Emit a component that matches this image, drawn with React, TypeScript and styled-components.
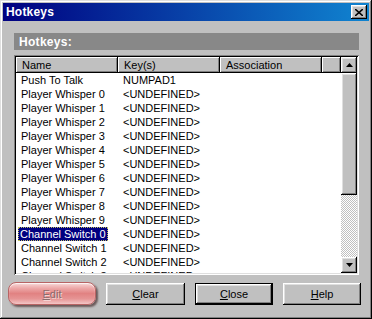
import React from 'react';
import styled, { createGlobalStyle } from 'styled-components';

const GlobalStyle = createGlobalStyle`
  html, body {
    margin: 0;
    padding: 0;
    background: #c0c0c0;
  }
  body {
    font-family: "Liberation Sans", Arial, sans-serif;
    font-size: 11px;
    color: #000;
  }
  * {
    box-sizing: border-box;
  }
`;

const raised = `
  box-shadow: inset -1px -1px #000, inset 1px 1px #fff, inset -2px -2px #808080, inset 2px 2px #dfdfdf;
`;

const Window = styled.div`
  width: 372px;
  height: 319px;
  background: #c0c0c0;
  padding: 3px;
  display: flex;
  flex-direction: column;
  box-shadow: inset -1px -1px #000, inset 1px 1px #dfdfdf, inset -2px -2px #808080, inset 2px 2px #fff;
`;

const TitleBar = styled.div`
  height: 18px;
  flex-shrink: 0;
  display: flex;
  align-items: center;
  justify-content: space-between;
  padding: 0 2px 0 3px;
  background: linear-gradient(to right, #000080, #1084d0);
`;

const TitleText = styled.span`
  color: #fff;
  font-weight: bold;
  font-size: 12px;
  letter-spacing: 0.2px;
`;

const TitleButton = styled.div`
  width: 16px;
  height: 14px;
  background: #c0c0c0;
  display: flex;
  align-items: center;
  justify-content: center;
  ${raised}
`;

const Group = styled.div`
  padding: 12px 10px 0 11px;
  display: flex;
  flex-direction: column;
`;

const GroupHeader = styled.div`
  height: 17px;
  background: #888888;
  color: #fff;
  font-weight: bold;
  font-size: 12px;
  display: flex;
  align-items: center;
  padding-left: 5px;
  letter-spacing: 0.3px;
`;

const ListView = styled.div`
  margin-top: 5px;
  height: 220px;
  padding: 2px;
  background: #fff;
  display: flex;
  box-shadow: inset 1px 1px #808080, inset -1px -1px #fff, inset 2px 2px #000, inset -2px -2px #dfdfdf;
`;

const ListMain = styled.div`
  flex: 1;
  overflow: hidden;
  display: flex;
  flex-direction: column;
`;

const HeaderRow = styled.div`
  display: flex;
  height: 16px;
  flex-shrink: 0;
`;

const HeaderCell = styled.div<{ $width: number }>`
  width: ${p => p.$width}px;
  flex-shrink: 0;
  height: 16px;
  line-height: 16px;
  padding-left: 6px;
  background: #c0c0c0;
  box-shadow: inset -1px -1px #000, inset 1px 1px #fff, inset -2px -2px #808080;
  white-space: nowrap;
  overflow: hidden;
`;

const Row = styled.div`
  display: flex;
  height: 14px;
  line-height: 14px;
  flex-shrink: 0;
`;

const Cell = styled.div<{ $width: number }>`
  width: ${p => p.$width}px;
  flex-shrink: 0;
  padding-left: 5px;
  white-space: nowrap;
  overflow: hidden;
`;

const Selected = styled.span`
  display: inline-block;
  margin-left: -3px;
  padding: 0 2px;
  height: 14px;
  background: #000080;
  color: #fff;
  outline: 1px dotted #c0c060;
  outline-offset: -1px;
`;

const ScrollBar = styled.div`
  width: 16px;
  flex-shrink: 0;
  display: flex;
  flex-direction: column;
`;

const ScrollButton = styled.div`
  height: 16px;
  flex-shrink: 0;
  background: #c0c0c0;
  display: flex;
  align-items: center;
  justify-content: center;
  ${raised}
`;

const Thumb = styled.div<{ $height: number }>`
  height: ${p => p.$height}px;
  flex-shrink: 0;
  background: #c0c0c0;
  ${raised}
`;

const Track = styled.div`
  flex: 1;
  background-color: #c0c0c0;
  background-image: conic-gradient(#fff 25%, #c0c0c0 0 50%, #fff 0 75%, #c0c0c0 0);
  background-size: 2px 2px;
`;

const ButtonRow = styled.div`
  margin-top: 7px;
  padding: 0 8px 0 5px;
  display: flex;
  justify-content: space-between;
  align-items: flex-start;
`;

const Button = styled.div<{ $width: number; $default?: boolean }>`
  width: ${p => p.$width}px;
  height: 22px;
  background: #c0c0c0;
  display: flex;
  align-items: center;
  justify-content: center;
  margin-top: 1px;
  ${p =>
    p.$default
      ? `box-shadow: inset 0 0 0 1px #000, inset -2px -2px #000, inset 2px 2px #fff, inset -3px -3px #808080, inset 3px 3px #dfdfdf;`
      : raised}
`;

const GlossyButton = styled.div<{ $width: number }>`
  width: ${p => p.$width}px;
  height: 23px;
  border-radius: 8px;
  display: flex;
  align-items: center;
  justify-content: center;
  color: #8a6c6c;
  text-shadow: 1px 1px #f4d4d4;
  border: 1px solid #b86464;
  background: linear-gradient(
    to bottom,
    #f8d8d8 0%,
    #eda8a8 25%,
    #e18282 50%,
    #e69494 75%,
    #f3c6c6 100%
  );
  box-shadow: 2px 2px 2px rgba(50, 20, 20, 0.6), inset 0 1px 1px rgba(255, 255, 255, 0.8);
`;

const Mnemonic = styled.span`
  text-decoration: underline;
`;

const columns = [102, 102, 102, 19];

const rows: [string, string][] = [
  ['Push To Talk', 'NUMPAD1'],
  ...Array.from({ length: 10 }, (_, i) => [`Player Whisper ${i}`, '<UNDEFINED>'] as [string, string]),
  ...Array.from({ length: 4 }, (_, i) => [`Channel Switch ${i}`, '<UNDEFINED>'] as [string, string]),
];

const selectedIndex = 11;

const Arrow = ({ down }: { down?: boolean }) => (
  <svg width="7" height="4" viewBox="0 0 7 4">
    <path d={down ? 'M0 0H7L3.5 4Z' : 'M3.5 0L7 4H0Z'} fill="#000" />
  </svg>
);

const CloseGlyph = () => (
  <svg width="8" height="7" viewBox="0 0 8 7">
    <path d="M0 0L8 7M8 0L0 7" stroke="#000" strokeWidth="1.6" />
  </svg>
);

const App: React.FC = () => {
  return (
    <>
      <GlobalStyle />
      <Window>
        <TitleBar>
          <TitleText>Hotkeys</TitleText>
          <TitleButton>
            <CloseGlyph />
          </TitleButton>
        </TitleBar>

        <Group>
          <GroupHeader>Hotkeys:</GroupHeader>
          <ListView>
            <ListMain>
              <HeaderRow>
                <HeaderCell $width={columns[0]}>Name</HeaderCell>
                <HeaderCell $width={columns[1]}>Key(s)</HeaderCell>
                <HeaderCell $width={columns[2]}>Association</HeaderCell>
                <HeaderCell $width={columns[3]} />
              </HeaderRow>
              {rows.map(([name, key], i) => (
                <Row key={name}>
                  <Cell $width={columns[0]}>
                    {i === selectedIndex ? <Selected>{name}</Selected> : name}
                  </Cell>
                  <Cell $width={columns[1]}>{key}</Cell>
                  <Cell $width={columns[2]} />
                </Row>
              ))}
            </ListMain>
            <ScrollBar>
              <ScrollButton>
                <Arrow />
              </ScrollButton>
              <Thumb $height={122} />
              <Track />
              <ScrollButton>
                <Arrow down />
              </ScrollButton>
            </ScrollBar>
          </ListView>
        </Group>

        <ButtonRow>
          <GlossyButton $width={88}>
            <span>
              <Mnemonic>E</Mnemonic>dit
            </span>
          </GlossyButton>
          <Button $width={79}>
            <span>
              <Mnemonic>C</Mnemonic>lear
            </span>
          </Button>
          <Button $width={78} $default>
            <span>
              <Mnemonic>C</Mnemonic>lose
            </span>
          </Button>
          <Button $width={78}>
            <span>
              <Mnemonic>H</Mnemonic>elp
            </span>
          </Button>
        </ButtonRow>
      </Window>
    </>
  );
};

export default App;
